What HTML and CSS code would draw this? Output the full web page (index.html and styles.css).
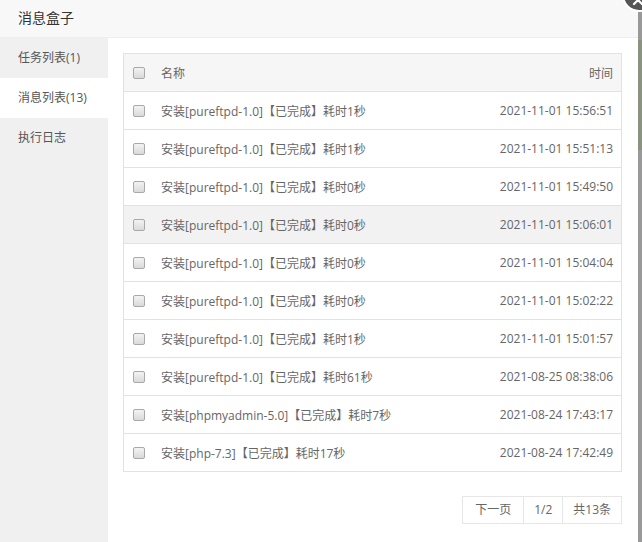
FILE: index.html
```html
<!DOCTYPE html>
<html lang="zh-CN">
<head>
<meta charset="utf-8">
<title>消息盒子</title>
<link rel="stylesheet" href="styles.css">
</head>
<body>
<div class="stage">
  <div class="dialog">
    <div class="dialog-title">消息盒子</div>
    <div class="dialog-body">
      <ul class="side">
        <li class="side-item">任务列表(1)</li>
        <li class="side-item active">消息列表(13)</li>
        <li class="side-item">执行日志</li>
      </ul>
      <div class="main">
        <table class="msg-table">
          <thead>
            <tr>
              <th class="c-check"><span class="cb"></span></th>
              <th class="c-name">名称</th>
              <th class="c-time">时间</th>
            </tr>
          </thead>
          <tbody>
            <tr><td class="c-check"><span class="cb"></span></td><td class="c-name">安装[pureftpd-1.0]【已完成】耗时1秒</td><td class="c-time">2021-11-01 15:56:51</td></tr>
            <tr><td class="c-check"><span class="cb"></span></td><td class="c-name">安装[pureftpd-1.0]【已完成】耗时1秒</td><td class="c-time">2021-11-01 15:51:13</td></tr>
            <tr><td class="c-check"><span class="cb"></span></td><td class="c-name">安装[pureftpd-1.0]【已完成】耗时0秒</td><td class="c-time">2021-11-01 15:49:50</td></tr>
            <tr class="hover"><td class="c-check"><span class="cb"></span></td><td class="c-name">安装[pureftpd-1.0]【已完成】耗时0秒</td><td class="c-time">2021-11-01 15:06:01</td></tr>
            <tr><td class="c-check"><span class="cb"></span></td><td class="c-name">安装[pureftpd-1.0]【已完成】耗时0秒</td><td class="c-time">2021-11-01 15:04:04</td></tr>
            <tr><td class="c-check"><span class="cb"></span></td><td class="c-name">安装[pureftpd-1.0]【已完成】耗时0秒</td><td class="c-time">2021-11-01 15:02:22</td></tr>
            <tr><td class="c-check"><span class="cb"></span></td><td class="c-name">安装[pureftpd-1.0]【已完成】耗时1秒</td><td class="c-time">2021-11-01 15:01:57</td></tr>
            <tr><td class="c-check"><span class="cb"></span></td><td class="c-name">安装[pureftpd-1.0]【已完成】耗时61秒</td><td class="c-time">2021-08-25 08:38:06</td></tr>
            <tr><td class="c-check"><span class="cb"></span></td><td class="c-name">安装[phpmyadmin-5.0]【已完成】耗时7秒</td><td class="c-time">2021-08-24 17:43:17</td></tr>
            <tr><td class="c-check"><span class="cb"></span></td><td class="c-name">安装[php-7.3]【已完成】耗时17秒</td><td class="c-time">2021-08-24 17:42:49</td></tr>
          </tbody>
        </table>
        <div class="pager">
          <span class="pg-btn">下一页</span>
          <span class="pg-btn">1/2</span>
          <span class="pg-btn">共13条</span>
        </div>
      </div>
    </div>
  </div>
  <div class="backdrop">
    <div class="bd-green"></div>
  </div>
  <div class="close-btn">
    <svg width="12" height="12" viewBox="0 0 12 12"><path d="M2 2 L10 10 M10 2 L2 10" stroke="#fff" stroke-width="2.2" stroke-linecap="round"/></svg>
  </div>
</div>
</body>
</html>
```

FILE: styles.css
```css
html, body {
  margin: 0;
  padding: 0;
  width: 642px;
  height: 542px;
  overflow: hidden;
  background: #fff;
}
body {
  font-family: "Open Sans", "Noto Sans CJK SC", sans-serif;
  font-size: 12px;
  color: #666;
}
.stage {
  position: relative;
  display: flex;
  width: 642px;
  height: 542px;
}
.dialog {
  width: 638px;
  height: 542px;
  display: flex;
  flex-direction: column;
  background: #fff;
}
.dialog-title {
  height: 37px;
  line-height: 35px;
  padding-left: 18px;
  font-size: 14px;
  color: #333;
  background: #f8f8f8;
  border-bottom: 1px solid #eee;
  flex: none;
}
.dialog-body {
  flex: 1;
  display: flex;
}
.side {
  list-style: none;
  margin: 0;
  padding: 0;
  width: 108px;
  background: #f0f0f0;
  flex: none;
}
.side-item {
  height: 40px;
  line-height: 40px;
  padding-left: 18px;
  color: #555;
}
.side-item.active {
  background: #fff;
}
.main {
  flex: 1;
  padding: 15px 16px 0 15px;
}
.msg-table {
  width: 100%;
  border-collapse: collapse;
  border: 1px solid #e2e2e2;
}
.msg-table th, .msg-table td {
  height: 37px;
  padding: 0;
  border-bottom: 1px solid #e2e2e2;
  font-weight: normal;
  color: #666;
  vertical-align: middle;
}
.msg-table thead th {
  background: #f6f6f6;
}
.msg-table tr.hover td {
  background: #f2f2f2;
}
.c-check {
  width: 28px;
  padding-left: 9px !important;
  text-align: left;
}
.c-name {
  text-align: left;
}
.c-time {
  text-align: right;
  padding-right: 8px !important;
}
.cb {
  display: block;
  width: 10px;
  height: 10px;
  border: 1px solid #a9a9a9;
  border-radius: 2px;
  background: linear-gradient(#f3f3f3, #dadada);
}
.pager {
  display: flex;
  justify-content: flex-end;
  margin-top: 24px;
}
.pg-btn {
  height: 26px;
  line-height: 26px;
  padding: 0 10px;
  border: 1px solid #e6e6e6;
  margin-left: -1px;
  color: #666;
}
.pg-btn:first-child {
  padding: 0 10px;
  width: 40px;
  text-align: center;
}
.backdrop {
  width: 4px;
  height: 542px;
  background: #999;
  flex: none;
  display: flex;
  flex-direction: column;
}
.bd-green {
  margin-top: 40px;
  height: 110px;
  background: #8a9381;
}
.close-btn {
  position: absolute;
  left: 622px;
  top: -22px;
  width: 30px;
  height: 30px;
  border-radius: 50%;
  background: #555;
  border: 2px solid #fff;
  display: flex;
  align-items: flex-end;
  justify-content: flex-start;
}
.close-btn svg {
  margin: 0 0 4px 8px;
}
```
